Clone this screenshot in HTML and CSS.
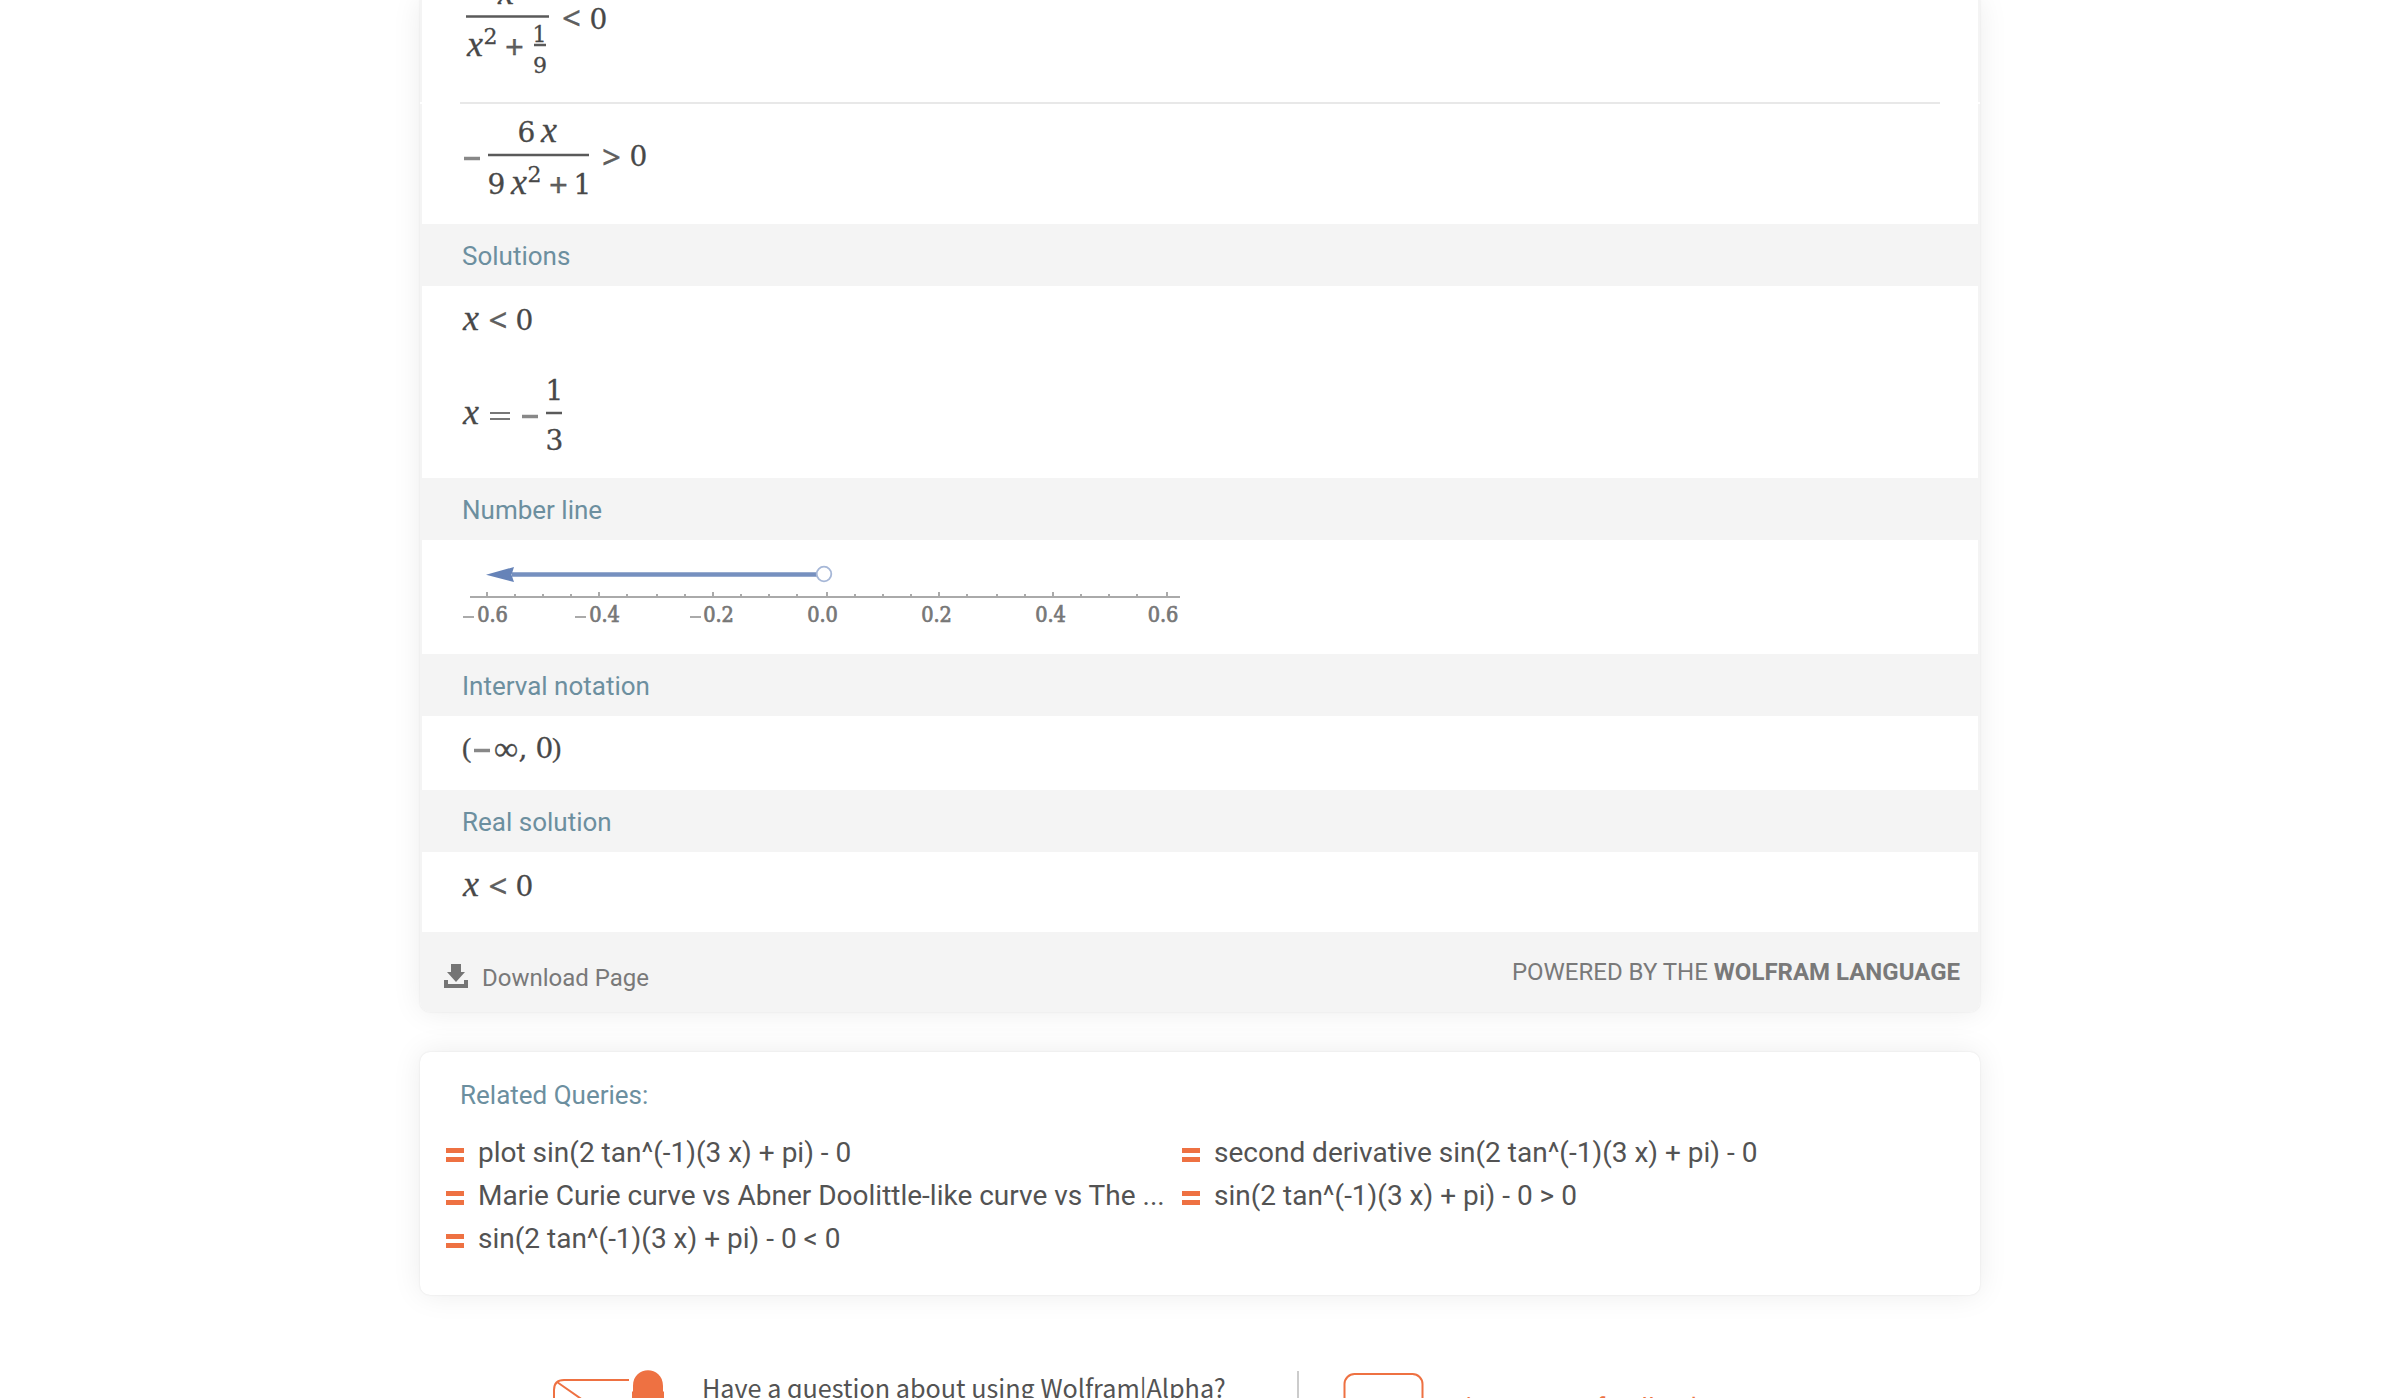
FILE: index.html
```html
<!DOCTYPE html>
<html lang="en">
<head>
<meta charset="utf-8">
<title>Wolfram|Alpha</title>
<link rel="stylesheet" href="styles.css">
</head>
<body>
<main class="page">
  <section class="card results">
    <div class="row row-first">
      <svg class="math" width="400" height="102" viewBox="460 0 400 102">
        <text class="var" x="498" y="4">x</text>
        <path class="bar" d="M466 16.5H549"/>
        <text class="op" x="562" y="30">&lt;</text><text x="589.500" y="29">0</text>
        <text class="var" x="467" y="56">x</text><text class="small" x="483.500" y="43.500">2</text>
        <text class="op" x="505" y="59">+</text>
        <text class="small" x="532.500" y="41.500">1</text>
        <path class="bar" d="M534 45H546"/>
        <text class="small" x="533" y="73">9</text>
      </svg>
    </div>
    <hr class="divider">
    <div class="row row-second">
      <svg class="math" width="400" height="120" viewBox="460 104 400 120">
        <path class="minus" d="M464 158.500H480"/>
        <text x="517.500" y="142">6</text><text class="var" x="541" y="142">x</text>
        <path class="bar" d="M488 155H589"/>
        <text class="op" x="602" y="168.500">&gt;</text><text x="629.500" y="166">0</text>
        <text x="487.500" y="194">9</text><text class="var" x="511" y="194">x</text><text class="small" x="527.500" y="182">2</text>
        <text class="op" x="549" y="197">+</text><text x="573.500" y="194">1</text>
      </svg>
    </div>
    <h2 class="band">Solutions</h2>
    <div class="row row-solutions">
      <svg class="math" width="400" height="192" viewBox="460 286 400 192">
        <text class="var" x="463" y="330">x</text><text class="op" x="488.500" y="332">&lt;</text><text x="515.500" y="330">0</text>
        <text class="var" x="463" y="424">x</text>
        <path class="bar thin" d="M490 413H510M490 419H510"/>
        <path class="minus" d="M522 416.500H538"/>
        <text x="545.500" y="400">1</text>
        <path class="bar" d="M546 413H562"/>
        <text x="545.500" y="450">3</text>
      </svg>
    </div>
    <h2 class="band">Number line</h2>
    <div class="row row-line">
      <svg class="plot" width="740" height="114" viewBox="460 540 740 114">
        <path class="ray" d="M512 574.500H818"/>
        <path class="head" d="M486 574.800L514 567L511.500 574.800L514 582Z"/>
        <circle class="end" cx="824" cy="574" r="7.300"/>
        <path class="axis" d="M470 597H1180M487 592v5M599 592v5M713 592v5M827 592v5M939 592v5M1053 592v5M1167 592v5M515 594v3M543 594v3M571 594v3M627 594v3M657 594v3M685 594v3M741 594v3M769 594v3M797 594v3M855 594v3M883 594v3M911 594v3M967 594v3M997 594v3M1025 594v3M1081 594v3M1109 594v3M1137 594v3"/>
        <path class="sign" d="M463 617H474M575 617H586M690 617H701"/>
        <g text-anchor="middle">
          <text x="492.500" y="621.500">0.6</text><text x="604.500" y="621.500">0.4</text><text x="718.500" y="621.500">0.2</text><text x="822.500" y="621.500">0.0</text><text x="936.500" y="621.500">0.2</text><text x="1050.500" y="621.500">0.4</text><text x="1163" y="621.500">0.6</text>
        </g>
      </svg>
    </div>
    <h2 class="band">Interval notation</h2>
    <div class="row row-interval">
      <svg class="math" width="400" height="74" viewBox="460 716 400 74">
        <text class="paren" x="462" y="757">(</text><path class="minus" d="M474 750.500H490"/>
        <text class="infinity" x="494" y="760">∞</text><text x="518.500" y="758">,</text><text x="535.500" y="758">0</text><text class="paren" x="552" y="757">)</text>
      </svg>
    </div>
    <h2 class="band">Real solution</h2>
    <div class="row row-real">
      <svg class="math" width="400" height="80" viewBox="460 852 400 80">
        <text class="var" x="463" y="896">x</text><text class="op" x="488.500" y="898">&lt;</text><text x="515.500" y="896">0</text>
      </svg>
    </div>
    <footer class="card-footer">
      <a class="download"><svg width="24" height="24" viewBox="0 0 24 24"><path d="M7 0h10v8h4L12 18 3 8h4zM0 16h4v4h16v-4h4v8H0z"/></svg>Download Page</a>
      <span class="powered">POWERED BY THE <b>WOLFRAM LANGUAGE</b></span>
    </footer>
  </section>

  <section class="card related">
    <h2 class="related-title">Related Queries:</h2>
    <div class="queries">
      <ul>
        <li>plot sin(2 tan^(-1)(3 x) + pi) - 0</li>
        <li>Marie Curie curve vs Abner Doolittle-like curve vs The ...</li>
        <li>sin(2 tan^(-1)(3 x) + pi) - 0 &lt; 0</li>
      </ul>
      <ul>
        <li>second derivative sin(2 tan^(-1)(3 x) + pi) - 0</li>
        <li>sin(2 tan^(-1)(3 x) + pi) - 0 &gt; 0</li>
      </ul>
    </div>
  </section>

  <section class="contact">
    <svg class="mail" width="116" height="80" viewBox="0 0 116 80">
      <path class="stroke" d="M78 11H13Q3 11 3 21V80M6 13L99 78"/>
      <path class="fill" d="M82 17C82 -4 112 -4 112 17V22L113 23V30H81V23L82 22Z"/>
    </svg>
    <p class="ask">Have a question about using Wolfram|Alpha?</p>
    <svg class="bubble" width="82" height="60" viewBox="0 0 82 60"><rect class="stroke" x="1.500" y="1" width="78" height="80" rx="10"/></svg>
    <a class="feedback">Give us your feedback</a>
  </section>
</main>
</body>
</html>
```
FILE: styles.css
```css
* { box-sizing: border-box; }
html, body { margin: 0; height: 1398px; overflow: hidden; background: #fff; }
body { font-family: Roboto, sans-serif; color: #535353; }
.page { width: 1560px; margin: 0 auto; }
.card { background: #fff; box-shadow: 0 0 2px rgba(0,0,0,.1), 0 0 30px rgba(0,0,0,.08); }
.results { border-radius: 0 0 10px 10px; }
.row { padding-left: 38px; border: solid #f4f4f4; border-width: 0 2px; overflow: hidden; }
.row svg { display: block; }
.row-first { height: 102px; }
.row-second { height: 120px; }
.row-solutions { height: 192px; }
.row-line { height: 114px; }
.row-interval { height: 74px; }
.row-real { height: 80px; }
.divider { height: 2px; margin: 0 40px; border: 0; background: #e8e8e8; }
.band { height: 62px; margin: 0; padding-left: 42px; background: #f4f4f4; color: #6c8f9f; font-size: 26px; font-weight: 400; line-height: 64px; }

.math { font-family: "DejaVu Serif", serif; font-size: 28px; fill: #484848; }
.math text { stroke: #484848; stroke-width: .3; }
.math .var { font-family: "Liberation Serif", serif; font-style: italic; font-size: 36px; }
.math .op { font-family: "Noto Sans", sans-serif; font-size: 33px; fill: #606060; }
.math .small { font-size: 22px; }
.math .paren { font-family: "Liberation Serif", serif; font-size: 28px; }
.math .infinity { font-family: "Liberation Serif", serif; font-size: 34px; }
.bar { stroke: #5a5a5a; stroke-width: 2.5; }
.bar.thin { stroke: #777; stroke-width: 2; }
.minus { stroke: #888; stroke-width: 3.5; }
.plot { font-family: "DejaVu Serif Condensed", "DejaVu Serif", serif; font-size: 21.5px; fill: #777; }
.plot text { stroke: #777; stroke-width: .7; }
.ray { stroke: #7690bf; stroke-width: 4.5; }
.head { fill: #6683b8; }
.end { fill: #fff; stroke: #a6b7d7; stroke-width: 1.8; }
.axis { stroke: #aaa; stroke-width: 2; }
.sign { stroke: #aaa; stroke-width: 2; }

.card-footer { height: 80px; padding: 0 20px 0 24px; display: flex; justify-content: space-between; background: #f4f4f4; border-radius: 0 0 10px 10px; color: #797979; font-size: 24px; }
.download { display: flex; gap: 14px; padding-top: 32px; line-height: 28px; }
.download svg { fill: #757575; }
.powered { padding-top: 26px; line-height: 28px; }

.related { height: 243px; margin-top: 40px; padding: 26px 0 0 26px; border-radius: 10px; }
.related-title { margin: 0 0 19px 14px; color: #6c8f9f; font-size: 26px; font-weight: 400; line-height: 34px; }
.queries { display: grid; grid-template-columns: 736px 1fr; }
.queries ul { list-style: none; margin: 0; padding: 0; }
.queries li { display: flex; align-items: center; gap: 14px; height: 43px; font-size: 28px; white-space: nowrap; }
.queries li::before { content: ""; width: 18px; height: 4px; margin-top: 4px; border: solid #ee7142; border-width: 5px 0; }

.contact { height: 103px; display: flex; padding-left: 131px; color: #535353; font-family: "Noto Sans CJK SC", sans-serif; font-size: 25.2px; }
.contact svg { flex: none; }
.stroke { fill: none; stroke: #ee7142; stroke-width: 2; }
.fill { fill: #ee7142; }
.mail { margin-top: 74px; }
.ask { width: 597px; margin: 76px 44px 0 35px; border-right: 2px solid #ccc; line-height: 32px; white-space: nowrap; }
.bubble { margin-top: 78px; }
.feedback { margin: 93px 0 0 23px; color: #ee7142; line-height: 36px; white-space: nowrap; }
```
